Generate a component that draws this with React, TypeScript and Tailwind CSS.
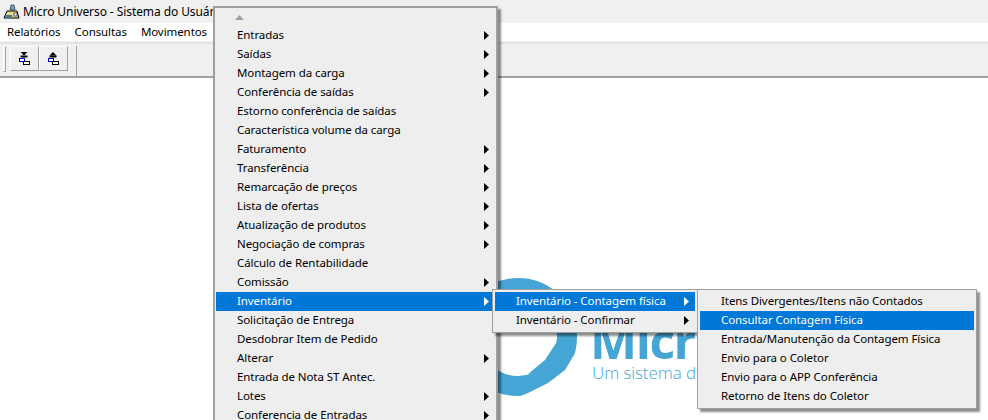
import React from 'react';

type Item = { label: string; sub?: boolean; active?: boolean };

const mainItems: Item[] = [
  { label: 'Entradas', sub: true },
  { label: 'Saídas', sub: true },
  { label: 'Montagem da carga', sub: true },
  { label: 'Conferência de saídas', sub: true },
  { label: 'Estorno conferência de saídas' },
  { label: 'Característica volume da carga' },
  { label: 'Faturamento', sub: true },
  { label: 'Transferência', sub: true },
  { label: 'Remarcação de preços', sub: true },
  { label: 'Lista de ofertas', sub: true },
  { label: 'Atualização de produtos', sub: true },
  { label: 'Negociação de compras', sub: true },
  { label: 'Cálculo de Rentabilidade' },
  { label: 'Comissão', sub: true },
  { label: 'Inventário', sub: true, active: true },
  { label: 'Solicitação de Entrega' },
  { label: 'Desdobrar Item de Pedido' },
  { label: 'Alterar', sub: true },
  { label: 'Entrada de Nota ST Antec.' },
  { label: 'Lotes', sub: true },
  { label: 'Conferencia de Entradas', sub: true },
];

const inventarioItems: Item[] = [
  { label: 'Inventário - Contagem física', sub: true, active: true },
  { label: 'Inventário - Confirmar', sub: true },
];

const contagemItems: Item[] = [
  { label: 'Itens Divergentes/Itens não Contados' },
  { label: 'Consultar Contagem Física', active: true },
  { label: 'Entrada/Manutenção da Contagem Física' },
  { label: 'Envio para o Coletor' },
  { label: 'Envio para o APP Conferência' },
  { label: 'Retorno de Itens do Coletor' },
];

// linha de menu no estilo Windows
const MenuRow = ({ item }: { item: Item }) => (
  <div
    className={`flex h-[19px] items-center justify-between pl-[21px] pr-[6px] ${
      item.active ? 'bg-[#0078d7] text-white' : 'text-black'
    }`}
  >
    <span className="mb-[2px] whitespace-nowrap">{item.label}</span>
    {item.sub && (
      <svg width="5" height="9" viewBox="0 0 5 9" className="shrink-0">
        <path d="M0 0 L5 4.5 L0 9 Z" fill={item.active ? '#ffffff' : '#000000'} />
      </svg>
    )}
  </div>
);

const ToolButton = ({ up }: { up?: boolean }) => (
  <div className="flex h-[25px] w-[29px] items-center justify-center border border-[#a0a0a0] border-t-white border-l-white bg-[#f0f0f0]">
    <svg width="11" height="14" viewBox="0 0 11 14">
      <path d={up ? 'M1.5 3.5 L5 0 L8.5 3.5 Z' : 'M1.5 0 L8.5 0 L5 3.5 Z'} fill="#000000" />
      <rect x="1.5" y="3.5" width="7" height="2" fill="#000000" />
      <rect x="0.5" y="6.5" width="5" height="3" fill="#ffffff" stroke="#0000c8" />
      <rect x="4.5" y="9.5" width="6" height="3" fill="#ffffff" stroke="#000000" />
    </svg>
  </div>
);

export default function App() {
  return (
    <div className="relative h-[420px] w-[988px] overflow-hidden bg-white text-[11.5px] leading-none tracking-[-0.08px] [font-family:'Noto_Sans',sans-serif]">
      {/* barra de título */}
      <div className="flex h-[23px] items-center gap-[3px] bg-[#f0f0f0] pl-[3px] text-[12px] text-black">
        <svg width="17" height="16" viewBox="0 0 17 16">
          <path d="M1 14 L4 7 L14 7 L16 14 Z" fill="#e8d98a" stroke="#000000" />
          <path d="M3 11 L9 11 L9 14 L2 14 Z" fill="#4a7a8c" />
          <path d="M8 1 L11 1 L12 6 L7 6 Z" fill="#6fa5c8" stroke="#203040" strokeWidth="0.7" />
          <rect x="11" y="9" width="3" height="3" fill="#ffffff" stroke="#000000" strokeWidth="0.6" />
        </svg>
        <span className="whitespace-nowrap">Micro Universo - Sistema do Usuário</span>
      </div>

      {/* barra de menus */}
      <div className="flex h-[19px] items-center gap-[14px] border-b border-[#f0f0f0] bg-white pl-[7px] text-black">
        <span>Relatórios</span>
        <span>Consultas</span>
        <span>Movimentos</span>
      </div>

      {/* barra de ferramentas */}
      <div className="flex h-[36px] items-start border-y-2 border-b-[#a0a0a0] border-t-[#e3e3e3] bg-[#f0f0f0] pl-[3px] pt-[2px]">
        <div className="mr-[4px] h-[26px] w-[3px] border border-[#a0a0a0] border-t-white border-l-white" />
        <ToolButton />
        <ToolButton up />
        <div className="ml-[8px] h-[32px] w-px bg-[#a0a0a0]" />
      </div>

      {/* logotipo ao fundo */}
      <svg width="200" height="140" viewBox="0 0 200 140" className="absolute left-[440px] top-[270px]">
        <circle cx="78" cy="67" r="49" fill="none" stroke="#45a5d4" strokeWidth="20" />
        <path d="M118 70 L112 93 L107 102 L88 104 L105 90 Z" fill="#45a5d4" />
        <path d="M137 80 L125 100 L108 113 L88 123 L78 127 L140 130 Z" fill="#ffffff" />
      </svg>
      <span className="absolute left-[590px] top-[313px] text-[50px] font-bold leading-[54px] tracking-[-1.5px] text-[#45a5d4] [font-family:'Open_Sans',sans-serif]">
        Micro
      </span>
      <span className="absolute left-[592px] top-[363px] whitespace-nowrap text-[17px] font-light leading-[20px] text-[#45a5d4] [font-family:'Open_Sans',sans-serif]">
        Um sistema de gestão
      </span>

      {/* menu principal */}
      <div className="absolute left-[213px] top-[6px] h-[440px] w-[285px] border-2 border-[#a0a0a0] bg-[#eeeeee] p-px shadow-[3px_3px_2px_rgba(0,0,0,0.45)]">
        <div className="flex h-[17px] items-center pl-[19px]">
          <svg width="9" height="5" viewBox="0 0 9 5">
            <path d="M0 5 L4.5 0 L9 5 Z" fill="#a0a0a0" />
          </svg>
        </div>
        {mainItems.map((item) => (
          <MenuRow key={item.label} item={item} />
        ))}
      </div>

      {/* submenu inventário */}
      <div className="absolute left-[492px] top-[289px] w-[206px] border border-[#a0a0a0] bg-[#eeeeee] p-[2px] shadow-[3px_3px_2px_rgba(0,0,0,0.45)]">
        {inventarioItems.map((item) => (
          <MenuRow key={item.label} item={item} />
        ))}
      </div>

      {/* submenu contagem física */}
      <div className="absolute left-[697px] top-[289px] w-[280px] border border-[#a0a0a0] bg-[#eeeeee] p-[2px] shadow-[3px_3px_2px_rgba(0,0,0,0.45)]">
        {contagemItems.map((item) => (
          <MenuRow key={item.label} item={item} />
        ))}
      </div>
    </div>
  );
}
